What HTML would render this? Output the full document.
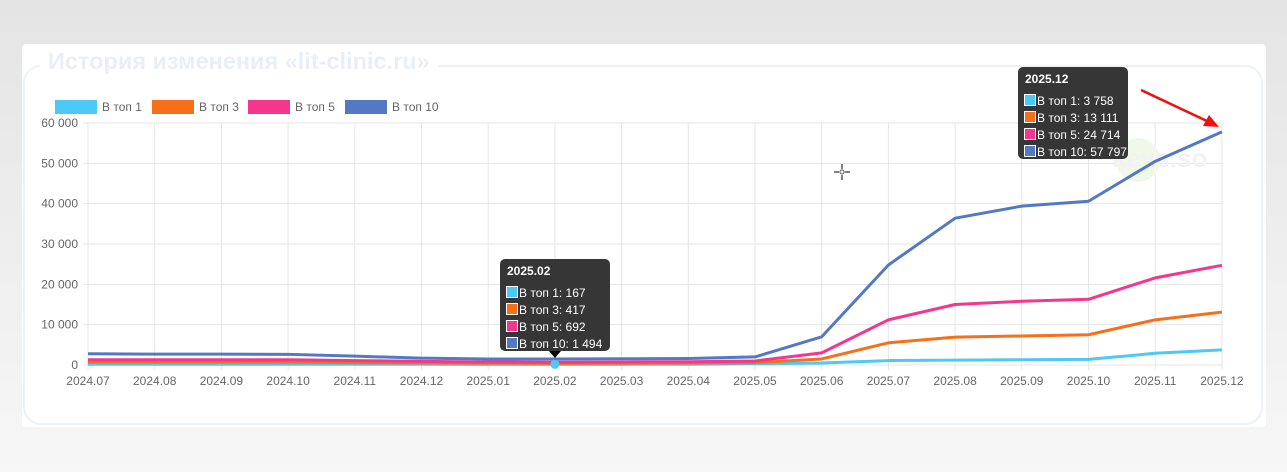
<!DOCTYPE html>
<html><head><meta charset="utf-8"><style>
html,body{margin:0;padding:0}
body{width:1287px;height:472px;background:linear-gradient(#e4e4e4,#f7f7f7);position:relative;overflow:hidden;font-family:"Liberation Sans",Arial,sans-serif}
.card{position:absolute;left:22px;top:44px;width:1244px;height:383px;background:#fff;border-radius:4px}
.fs{position:absolute;left:23px;top:65px;width:1240px;height:360px;border:2px solid #edf2f8;border-radius:18px;box-sizing:border-box}
.title{position:absolute;left:40px;top:48px;background:#fff;padding:0 8px;font-size:23.5px;font-weight:bold;color:#e9eff7}
svg{position:absolute;left:0;top:0}
</style></head><body>
<div class="card"></div><div class="fs"></div>
<div class="title">История изменения «lit-clinic.ru»</div>
<svg id="s" width="1287" height="472" font-family="Liberation Sans, Arial, sans-serif"></svg>
<script>
const s=document.getElementById('s');let h='';
const X=i=>88+i*66.7, Y=v=>365-v*0.004033;
for(let i=0;i<18;i++){h+=`<line x1="${X(i)}" y1="123" x2="${X(i)}" y2="370" stroke="#e6e6e6"/>`;}
for(let k=0;k<=6;k++){let y=Y(k*10000);h+=`<line x1="83" y1="${y}" x2="1222" y2="${y}" stroke="#e6e6e6"/><text x="78" y="${y+4}" font-size="12" fill="#666" text-anchor="end">${k?k*10+' 000':'0'}</text>`;}
const L=['2024.07','2024.08','2024.09','2024.10','2024.11','2024.12','2025.01','2025.02','2025.03','2025.04','2025.05','2025.06','2025.07','2025.08','2025.09','2025.10','2025.11','2025.12'];
L.forEach((t,i)=>h+=`<text x="${X(i)}" y="385" font-size="12" fill="#666" text-anchor="middle">${t}</text>`);
h+=`<circle cx="1138" cy="160" r="22" fill="#f0f8ea"/><text x="1112" y="167" font-size="26" font-weight="bold" fill="#f2f2f2">keys.so</text>`;
const D=[
['#5479c4',[2800,2700,2700,2650,2200,1700,1500,1494,1550,1600,2000,7000,24800,36400,39400,40600,50500,57797]],
['#f5368f',[1300,1300,1300,1300,1100,900,750,692,750,800,1000,3000,11200,15000,15800,16300,21600,24714]],
['#f67019',[700,700,700,700,600,500,430,417,430,450,600,1500,5500,6900,7200,7500,11200,13111]],
['#4dc9f6',[200,200,200,200,190,180,170,167,170,180,300,500,1100,1200,1300,1400,2900,3758]]];
D.slice().reverse().forEach(([c,v])=>{h+=`<polyline fill="none" stroke="${c}" stroke-width="3" stroke-linejoin="round" points="${v.map((a,i)=>X(i)+','+Y(a)).join(' ')}"/>`;});
h+=`<circle cx="${X(7)}" cy="${Y(167)}" r="4.5" fill="#4dc9f6"/>`;
[['#4dc9f6','В топ 1',55],['#f67019','В топ 3',152],['#f5368f','В топ 5',248],['#5479c4','В топ 10',345]].forEach(([c,t,x])=>{h+=`<rect x="${x}" y="100" width="42" height="14" fill="${c}"/><text x="${x+47}" y="111" font-size="12" fill="#666">${t}</text>`;});
function tip(x,y,title,rows,ptr){h+=`<rect x="${x}" y="${y}" width="110" height="92" rx="5" fill="#2f2f2f" opacity=".97"/>`;if(ptr)h+=`<path d="M${x+49},${y+92} L${x+55},${y+99} L${x+61},${y+92}Z" fill="#000"/>`;
h+=`<text x="${x+7}" y="${y+16}" font-size="12" font-weight="bold" fill="#fff">${title}</text>`;
rows.forEach((r,i)=>{let yy=y+27+i*17;h+=`<rect x="${x+6.5}" y="${yy+.5}" width="11" height="11" fill="${D[3-i][0]}" stroke="#fff" stroke-width="1"/><text x="${x+19}" y="${yy+11}" font-size="12" fill="#fff">${r}</text>`;});}
tip(500,259,'2025.02',['В топ 1: 167','В топ 3: 417','В топ 5: 692','В топ 10: 1 494'],1);
tip(1018,67,'2025.12',['В топ 1: 3 758','В топ 3: 13 111','В топ 5: 24 714','В топ 10: 57 797'],0);
h+=`<line x1="1141" y1="90" x2="1209" y2="122" stroke="#f01010" stroke-width="2.5"/><path d="M1219,127 L1203,126 L1209,115Z" fill="#f01010"/>`;
h+=`<path d="M842,164V169M842,175V180M834,172H839M845,172H850" stroke="#555" stroke-width="1.5"/><circle cx="842" cy="172" r="2" fill="none" stroke="#555"/>`;
s.innerHTML=h;
</script>
</body></html>
